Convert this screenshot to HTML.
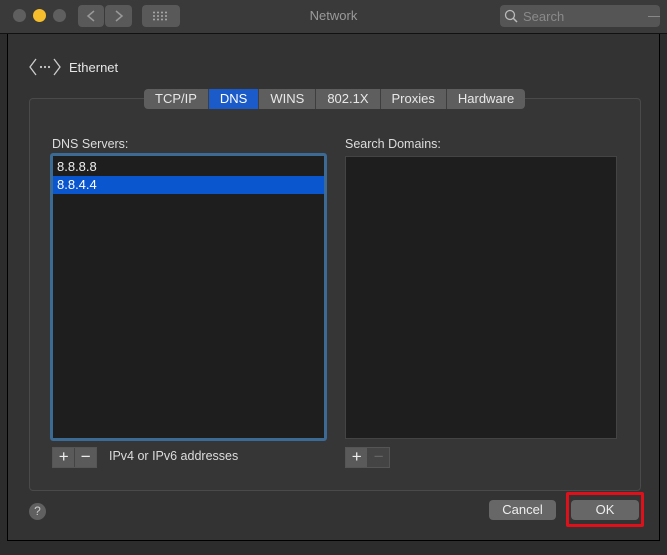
<!DOCTYPE html>
<html><head><meta charset="utf-8"><style>
*{margin:0;padding:0;box-sizing:border-box}
body{width:667px;height:555px;background:#2c2c2c;font-family:"Liberation Sans",sans-serif;position:relative;overflow:hidden;color:#ddd}
.a{position:absolute}
.tb{left:0;top:0;width:667px;height:34px;background:#3a3a3a;border-bottom:1px solid #111}
.dot{width:13px;height:13px;border-radius:50%;top:9px;background:#5f5f5f}
.btn{background:#595959;border-radius:4px}
.sheet{left:7px;top:34px;width:653px;height:507px;background:#333;border:1px solid #000;border-top:none}
.grp{left:29px;top:98px;width:612px;height:393px;border:1px solid #4a4a4a;border-radius:4px;background:#363636}
.tabs{left:144px;top:89px;height:20px;display:flex;border-radius:4px;overflow:hidden;background:#5e5e5e;font-size:13px;color:#e8e8e8}
.tabs div{padding:0 11px;line-height:20px;border-right:1px solid #3e3e3e}
.tabs div:last-child{border:none}
.tabs .on{background:#1b5bc9;color:#fff}
.list{background:#1e1e1e}
.pm{top:447px;height:21px;width:45px;display:flex;border:1px solid #555}
.pm div{width:22px;height:19px;background:#5a5a5a;color:#eee;text-align:center;font-size:17px;line-height:18px}
.pm div+div{border-left:1px solid #444}
.pb{top:500px;height:20px;background:#676767;border-radius:4px;color:#eee;font-size:13px;text-align:center;line-height:20px}
</style></head><body>
<div class="a tb">
 <div class="a dot" style="left:13px"></div>
 <div class="a dot" style="left:33px;background:#f6bd2d"></div>
 <div class="a dot" style="left:53px"></div>
 <div class="a btn" style="left:78px;top:5px;width:26px;height:22px"></div>
 <div class="a btn" style="left:105px;top:5px;width:27px;height:22px"></div>
 <svg class="a" style="left:78px;top:5px" width="54" height="22"><path d="M16 6 L10 11 L16 16 M38 6 L44 11 L38 16" stroke="#999" stroke-width="1.5" fill="none"/></svg>
 <div class="a btn" style="left:142px;top:5px;width:38px;height:22px"></div>
 <svg class="a" style="left:152px;top:11px" width="18" height="10"><g fill="#aaa"><circle cx="2" cy="1.5" r="1"/><circle cx="6" cy="1.5" r="1"/><circle cx="10" cy="1.5" r="1"/><circle cx="14" cy="1.5" r="1"/><circle cx="2" cy="5" r="1"/><circle cx="6" cy="5" r="1"/><circle cx="10" cy="5" r="1"/><circle cx="14" cy="5" r="1"/><circle cx="2" cy="8.5" r="1"/><circle cx="6" cy="8.5" r="1"/><circle cx="10" cy="8.5" r="1"/><circle cx="14" cy="8.5" r="1"/></g></svg>
 <div class="a" style="left:0;width:667px;top:8px;text-align:center;font-size:13px;color:#9a9a9a">Network</div>
 <div class="a btn" style="left:500px;top:5px;width:160px;height:22px;background:#555"></div>
 <svg class="a" style="left:504px;top:9px" width="14" height="14"><circle cx="6" cy="6" r="4.5" stroke="#bbb" stroke-width="1.3" fill="none"/><path d="M9 9 L13 13" stroke="#bbb" stroke-width="1.5"/></svg>
 <div class="a" style="left:523px;top:9px;font-size:13px;color:#8a8a8a">Search</div>
 <div class="a" style="left:648px;top:16px;width:12px;height:1px;background:#888"></div>
</div>
<div class="a sheet"></div>
<svg class="a" style="left:28px;top:57px" width="34" height="20"><path d="M8 2 L2 10 L8 18 M26 2 L32 10 L26 18" stroke="#ccc" stroke-width="1.3" fill="none"/><g fill="#ccc"><circle cx="13" cy="10" r="1.1"/><circle cx="17" cy="10" r="1.1"/><circle cx="21" cy="10" r="1.1"/></g></svg>
<div class="a" style="left:69px;top:60px;font-size:13px;color:#e6e6e6">Ethernet</div>
<div class="a grp"></div>
<div class="a tabs"><div>TCP/IP</div><div class="on">DNS</div><div>WINS</div><div>802.1X</div><div>Proxies</div><div>Hardware</div></div>
<div class="a" style="left:52px;top:137px;font-size:12.5px;color:#ddd">DNS Servers:</div>
<div class="a" style="left:345px;top:137px;font-size:12.5px;color:#ddd">Search Domains:</div>
<div class="a list" style="left:50px;top:153px;width:277px;height:288px;border:3px solid #3b6a94;border-radius:3px">
 <div style="height:19px;margin-top:1px;padding-left:4px;font-size:13px;line-height:19px;color:#eee">8.8.8.8</div>
 <div style="height:18px;background:#0a56cf;padding-left:4px;font-size:13px;line-height:18px;color:#fff">8.8.4.4</div>
</div>
<div class="a list" style="left:345px;top:156px;width:272px;height:283px;border:1px solid #444"></div>
<div class="a pm" style="left:52px"><div>+</div><div>−</div></div>
<div class="a" style="left:109px;top:449px;font-size:12.5px;color:#ddd">IPv4 or IPv6 addresses</div>
<div class="a pm" style="left:345px"><div>+</div><div style="background:#444;color:#666">−</div></div>
<div class="a" style="left:29px;top:503px;width:17px;height:17px;border-radius:50%;background:#606060;color:#ccc;font-size:12px;text-align:center;line-height:17px">?</div>
<div class="a pb" style="left:489px;width:67px">Cancel</div>
<div class="a" style="left:566px;top:492px;width:78px;height:35px;border:3px solid #e0101a;border-radius:2px"></div>
<div class="a pb" style="left:571px;width:68px">OK</div>
</body></html>
